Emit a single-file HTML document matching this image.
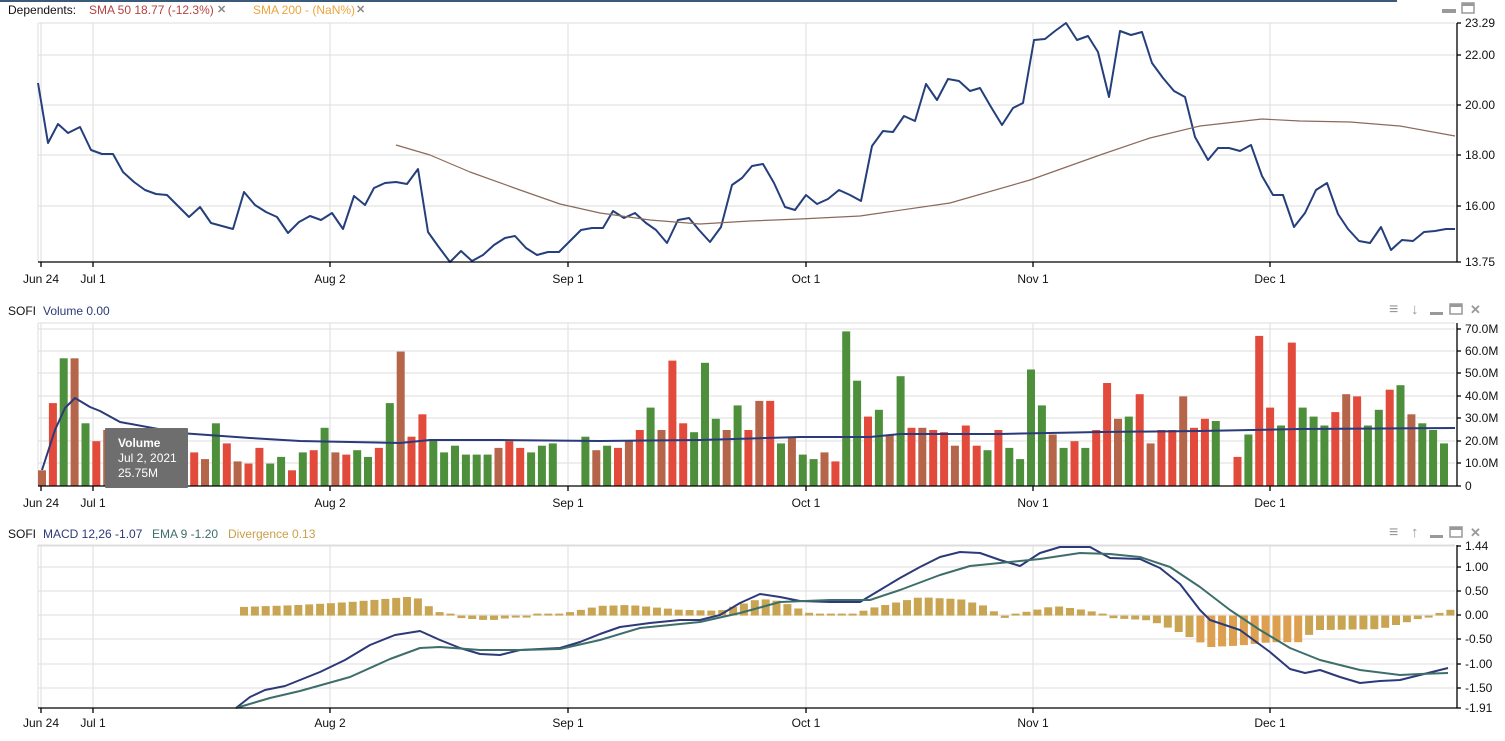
<!DOCTYPE html>
<html><head><meta charset="utf-8">
<style>
html,body{margin:0;padding:0;background:#fff;width:1505px;height:741px;overflow:hidden}
svg{display:block;font-family:"Liberation Sans",Arial,sans-serif}
</style></head><body>
<svg id="s" width="1505" height="741" viewBox="0 0 1505 741" xmlns="http://www.w3.org/2000/svg">
<rect x="0" y="0" width="1397" height="2" fill="#3a5a7a"/>
<g font-size="12">
<text x="8" y="14" fill="#111">Dependents:</text>
<text x="89" y="14" fill="#b5413f">SMA 50 18.77 (-12.3%)</text>
<text x="217" y="13" fill="#888" font-size="11" font-weight="bold">✕</text>
<text x="253" y="14" fill="#eba43a">SMA 200 - (NaN%)</text>
<text x="356" y="13" fill="#888" font-size="11" font-weight="bold">✕</text>
<text x="8" y="315" fill="#111">SOFI</text>
<text x="43" y="315" fill="#2c3a7a">Volume 0.00</text>
<text x="8" y="538" fill="#111">SOFI</text>
<text x="43" y="538" fill="#2c3a7a">MACD 12,26 -1.07</text>
<text x="152" y="538" fill="#3d6e6a">EMA 9 -1.20</text>
<text x="228" y="538" fill="#c9a04a">Divergence 0.13</text>
</g>
<g fill="#999">
<rect x="1442" y="9" width="14" height="4"/>
<rect x="1462" y="3" width="12" height="10" fill="none" stroke="#999" stroke-width="1.5"/><rect x="1462" y="3" width="12" height="3"/>
</g>
<g id="icons"></g>
<g id="grid" stroke="#ddd" stroke-width="1"></g>
<g id="bars"></g>
<g id="lines" fill="none"></g>
<g id="axes" stroke="#000" stroke-width="1.3"></g>
<g id="labels" font-size="12" fill="#111"></g>
<rect x="105" y="428" width="83" height="60" fill="#6e6e6e" rx="1"/>
<text x="118" y="447" fill="#fff" font-size="12" font-weight="bold">Volume</text>
<text x="118" y="462" fill="#fff" font-size="12">Jul 2, 2021</text>
<text x="118" y="477" fill="#fff" font-size="12">25.75M</text>
</svg>
<script>
var NS="http://www.w3.org/2000/svg";
function el(p,t,a,txt){var e=document.createElementNS(NS,t);for(var k in a)e.setAttribute(k,a[k]);if(txt!=null)e.textContent=txt;document.getElementById(p).appendChild(e);return e;}
var dx=[41,93,330,568,806,1033,1270],dl=["Jun 24","Jul 1","Aug 2","Sep 1","Oct 1","Nov 1","Dec 1"];
var panels=[{t:23,b:262,ly:283,y:[[23,"23.29"],[55,"22.00"],[105,"20.00"],[155,"18.00"],[206,"16.00"],[262,"13.75"]]},
{t:323,b:486,ly:507,y:[[329,"70.0M"],[351,"60.0M"],[373,"50.0M"],[396,"40.0M"],[418,"30.0M"],[441,"20.0M"],[463,"10.0M"],[486,"0"]]},
{t:545,b:708,ly:727,y:[[546,"1.44"],[567,"1.00"],[591,"0.50"],[615,"0.00"],[639,"-0.50"],[664,"-1.00"],[688,"-1.50"],[708,"-1.91"]]}];
panels.forEach(function(p,i){
 el("grid","line",{x1:38,x2:1455,y1:p.t,y2:p.t});
 p.y.forEach(function(v){el("grid","line",{x1:38,x2:1455,y1:v[0],y2:v[0]});el("axes","line",{x1:1457,x2:1461,y1:v[0],y2:v[0]});el("labels","text",{x:1465,y:v[0]+4},v[1]);});
 el("grid","line",{x1:38,x2:38,y1:p.t,y2:p.b});
 dx.forEach(function(x,j){el("grid","line",{x1:x,x2:x,y1:p.t,y2:p.b});el("axes","line",{x1:x,x2:x,y1:p.b,y2:p.b+5});el("labels","text",{x:x,y:p.ly,"text-anchor":"middle"},dl[j]);});
 el("axes","line",{x1:1457,x2:1457,y1:p.t,y2:p.b});
 el("axes","line",{x1:38,x2:1457,y1:p.b,y2:p.b});
});
// icons for panels 2,3
[[308,"↓"],[531,"↑"]].forEach(function(q){var y=q[0];
 el("icons","text",{x:1389,y:y+6,"font-size":"16",fill:"#999"},"≡");
 el("icons","text",{x:1411,y:y+6,"font-size":"15",fill:"#999","font-weight":"bold"},q[1]);
 el("icons","rect",{x:1430,y:y+4,width:13,height:3,fill:"#999"});
 el("icons","rect",{x:1450,y:y-4,width:12,height:10,fill:"none",stroke:"#999","stroke-width":"1.5"});
 el("icons","rect",{x:1450,y:y-4,width:12,height:3,fill:"#999"});
 el("icons","text",{x:1470,y:y+6,"font-size":"13",fill:"#999","font-weight":"bold"},"✕");
});
function pl(pts,c,w){el("lines","polyline",{points:pts.map(function(p){return p.join(",")}).join(" "),stroke:c,"stroke-width":w,"stroke-linejoin":"round"});}
pl([[38,83],[48,143],[58,124],[68,133],[80,127],[91,150],[102,154],[113,154],[123,172],[134,182],[145,190],[156,194],[167,195],[178,206],[189,217],[200,207],[211,223],[222,226],[233,229],[244,192],[255,205],[266,212],[277,217],[288,233],[299,222],[310,216],[321,220],[332,213],[343,229],[354,196],[365,205],[374,188],[385,183],[396,182],[407,184],[418,169],[428,232],[438,246],[450,262],[461,251],[472,261],[483,255],[494,245],[505,238],[515,236],[526,248],[537,255],[548,252],[559,252],[570,241],[581,230],[592,228],[603,228],[613,211],[624,218],[635,213],[646,223],[656,230],[667,243],[678,220],[689,218],[699,230],[710,242],[721,227],[732,185],[742,178],[752,166],[763,164],[774,183],[785,207],[795,210],[806,195],[817,204],[828,199],[839,190],[850,195],[861,201],[872,146],[883,131],[893,132],[904,116],[915,121],[926,84],[937,100],[948,79],[959,81],[970,91],[980,88],[991,107],[1002,125],[1013,108],[1023,103],[1034,40],[1045,39],[1055,31],[1066,23],[1077,40],[1088,36],[1098,52],[1109,97],[1120,31],[1131,35],[1142,32],[1152,63],[1163,78],[1174,91],[1185,97],[1195,137],[1208,160],[1218,148],[1229,148],[1240,151],[1251,145],[1262,176],[1273,195],[1283,195],[1294,227],[1305,213],[1316,190],[1327,183],[1338,214],[1348,229],[1359,241],[1370,243],[1381,227],[1391,250],[1402,240],[1413,241],[1424,232],[1435,231],[1446,229],[1455,229]],"#253f7c",2);
pl([[396,145],[430,155],[470,172],[520,190],[560,204],[600,213],[650,220],[700,224],[750,221],[800,219],[860,216],[950,203],[1030,180],[1100,155],[1150,138],[1200,126],[1262,119],[1300,121],[1350,122],[1400,126],[1455,136]],"#8b6a5a",1.2);
// volume bars
var V="7b 37r 57g 57r 28g 20r 25r 22g 20g 20r 19g 18r 16g 14r 15r 12r 28g 19r 11r 10r 17r 10g 13g 7r 15g 16r 26g 15r 14r 16g 13g 17r 37g 60r 22r 32r 21g 15g 18g 14g 14g 14g 17r 20r 17r 15g 18g 19g 0g 0g 22g 16r 18g 17r 20r 25r 35g 25r 56r 28r 24g 55g 30g 25r 36g 25r 38r 38r 19g 22r 14g 12g 15r 11r 69g 47g 31r 34g 23r 49g 26r 26r 25r 24r 18r 27r 18r 16g 25r 17g 12g 52g 36g 23r 17g 20r 17g 25r 46r 30r 31g 41r 19r 25r 25r 40r 26r 30r 29g 0g 13r 23g 67r 35r 27g 64r 35g 31g 27g 33r 41r 40r 27g 34g 43r 45g 32r 28g 25g 19g".split(" ");
var step=(1444-42)/(V.length-1);
V.forEach(function(s,i){var v=parseFloat(s),c=s.slice(-1);if(!v)return;var h=v*2.24,x=42+i*step-4;
 var col=c=="g"?"#4e8f3c":(i%3==0?"#b5654a":"#e24b3b");
 el("bars","rect",{x:x.toFixed(1),y:(486-h).toFixed(1),width:8,height:h.toFixed(1),fill:col});});
pl([[42,470],[55,430],[65,408],[75,398],[90,407],[100,411],[120,422],[180,433],[250,438],[300,441],[400,443],[430,440],[500,440],[600,441],[700,440],[800,437],[870,437],[900,434],[1000,434],[1100,432],[1200,431],[1300,429],[1455,428]],"#2a3a7a",2);
// divergence
var A=[[244,0.18],[300,0.22],[350,0.28],[415,0.4],[425,0.25],[435,0.1],[460,-0.05],[490,-0.1],[520,-0.02],[560,0.03],[600,0.2],[630,0.22],[680,0.12],[720,0.1],[760,0.35],[780,0.3],[810,0.05],[850,0.0],[870,0.15],[920,0.38],[960,0.34],[985,0.2],[1005,-0.05],[1020,0.05],[1055,0.2],[1090,0.1],[1110,-0.05],[1150,-0.1],[1180,-0.35],[1210,-0.65],[1240,-0.62],[1270,-0.55],[1300,-0.55],[1315,-0.3],[1380,-0.28],[1410,-0.12],[1430,0],[1452,0.13]];
function interp(x){for(var i=0;i<A.length-1;i++){if(x<=A[i+1][0]){var t=(x-A[i][0])/(A[i+1][0]-A[i][0]);return A[i][1]+t*(A[i+1][1]-A[i][1]);}}return A[A.length-1][1];}
for(var x=244;x<=1453;x+=step){var v=interp(x),h=Math.abs(v)*48.36;if(h<2)h=2;
 el("bars","rect",{x:(x-4).toFixed(1),y:(v>0?615.6-h:615.6).toFixed(1),width:8,height:h.toFixed(1),fill:(v<-0.5?"#dda050":"#c9a553")});}
pl([[236,708],[250,697],[265,690],[285,686],[300,680],[320,672],[345,660],[370,645],[395,635],[420,631],[440,640],[460,648],[480,654],[500,655],[520,650],[540,649],[560,648],[580,642],[600,634],[620,627],[650,623],[680,620],[700,620],[720,615],[740,603],[760,594],[780,597],[800,601],[830,602],[860,602],[880,590],[900,578],[920,567],[940,557],[960,552],[980,553],[1000,560],[1020,566],[1040,553],[1060,547],[1090,547],[1110,558],[1140,559],[1160,568],[1180,584],[1200,610],[1210,620],[1240,630],[1270,652],[1290,669],[1305,673],[1320,670],[1340,677],[1360,683],[1380,681],[1400,680],[1420,675],[1448,668]],"#2c3a7a",2);
pl([[236,708],[270,698],[300,691],[350,677],[390,659],[420,648],[440,647],[480,650],[520,650],[560,649],[600,640],[640,628],[700,622],[740,613],[780,602],[830,600],[870,600],[900,590],[940,575],[970,566],[1000,563],[1040,559],[1080,553],[1110,554],[1140,557],[1170,567],[1200,587],[1230,610],[1260,630],[1290,648],[1320,660],[1360,670],[1400,675],[1420,674],[1448,673]],"#3d6e6a",2);
</script>
</body></html>
